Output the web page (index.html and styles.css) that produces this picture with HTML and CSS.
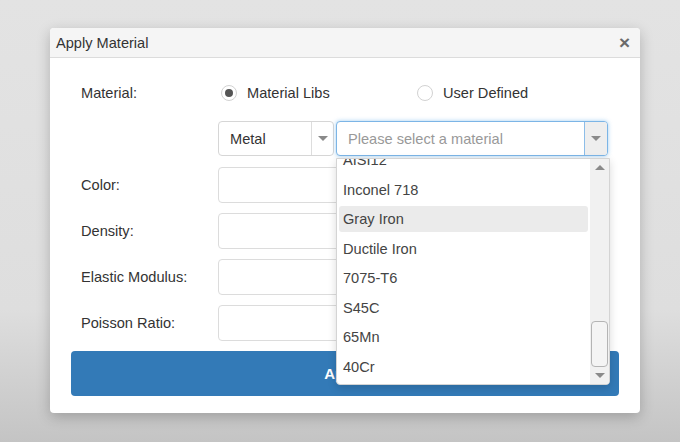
FILE: index.html
```html
<!DOCTYPE html>
<html>
<head>
    <title>Apply Material</title>
    <link rel="stylesheet" href="styles.css">
</head>
<body>
    <div class="dialog">
        <div class="dialog-header">
            <span class="dialog-title">Apply Material</span>
            <span class="close">&times;</span>
        </div>

        <div class="dialog-body">
            <div class="form-row radio-row">
                <label class="form-label">Material:</label>
                <div class="form-field radios">
                    <label class="radio"><span class="radio-dot checked"></span>Material Libs</label>
                    <label class="radio"><span class="radio-dot"></span>User Defined</label>
                </div>
            </div>

            <div class="form-row select-row">
                <div class="form-label"></div>
                <div class="form-field selects">
                    <div class="select type-select">
                        <span class="select-text">Metal</span>
                        <span class="select-arrow"><span class="caret"></span></span>
                    </div>
                    <div class="select material-select">
                        <span class="select-text placeholder">Please select a material</span>
                        <span class="select-arrow"><span class="caret"></span></span>

                        <div class="dropdown">
                            <ul class="options">
                                <li>AISI12</li>
                                <li>Inconel 718</li>
                                <li class="hover">Gray Iron</li>
                                <li>Ductile Iron</li>
                                <li>7075-T6</li>
                                <li>S45C</li>
                                <li>65Mn</li>
                                <li>40Cr</li>
                            </ul>
                            <div class="scrollbar">
                                <div class="scroll-btn"><span class="caret up"></span></div>
                                <div class="scroll-track"><div class="scroll-thumb"></div></div>
                                <div class="scroll-btn"><span class="caret"></span></div>
                            </div>
                        </div>
                    </div>
                </div>
            </div>

            <div class="form-row">
                <label class="form-label">Color:</label>
                <div class="form-field"><input type="text" class="input"></div>
            </div>
            <div class="form-row">
                <label class="form-label">Density:</label>
                <div class="form-field"><input type="text" class="input"></div>
            </div>
            <div class="form-row">
                <label class="form-label">Elastic Modulus:</label>
                <div class="form-field"><input type="text" class="input"></div>
            </div>
            <div class="form-row">
                <label class="form-label">Poisson Ratio:</label>
                <div class="form-field"><input type="text" class="input"></div>
            </div>

            <button class="btn-apply">Apply</button>
        </div>
    </div>
</body>
</html>
```

FILE: styles.css
```css
html, body { height: 100%; }
body { margin: 0; font-family: "Liberation Sans", Arial, sans-serif; font-size: 14.6px; color: #333; background: linear-gradient(#e3e3e3 0%, #dedede 70%, #c4c4c4 100%); overflow: hidden; }

.dialog { width: 590px; margin: 28px 0 0 50px; background: #fff; border-radius: 4px; box-shadow: 0 4px 14px rgba(0,0,0,0.22); box-sizing: border-box; }
.dialog-header { height: 30px; display: flex; align-items: center; justify-content: space-between; padding: 0 10px 0 6px; background: #f5f5f5; border-bottom: 1px solid #dcdcdc; border-radius: 4px 4px 0 0; box-sizing: border-box; }
.dialog-title { font-size: 14.6px; color: #333; }
.close { font-size: 19px; font-weight: bold; color: #6a6a6a; line-height: 1; }

.dialog-body { padding: 22px 21px 17px; }
.form-row { display: flex; align-items: center; padding-right: 11px; margin-top: 10px; }
.radio-row { height: 26px; margin-top: 0; }
.select-row { margin-top: 15px; }
.select-row + .form-row { margin-top: 11px; }
.form-label { width: 147px; padding-left: 10px; box-sizing: border-box; flex-shrink: 0; }
.form-field { flex: 1; }

.radios { display: grid; grid-template-columns: 1fr 1fr; }
.radio { display: flex; align-items: center; padding-left: 3px; }
.radio + .radio { padding-left: 4px; }
.radio-dot { width: 16px; height: 16px; border: 1px solid #d2d2d2; border-radius: 50%; margin-right: 10px; box-sizing: border-box; display: flex; align-items: center; justify-content: center; background: #fff; }
.radio-dot.checked::after { content: ""; width: 8px; height: 8px; border-radius: 50%; background: #555; }

.selects { display: flex; gap: 2px; }
.select { position: relative; height: 35px; display: flex; align-items: stretch; border: 1px solid #d6d6d6; border-radius: 4px; box-sizing: border-box; background: #fff; }
.type-select { width: 116px; }
.material-select { flex: 1; border-color: #7cb5e6; box-shadow: 0 0 4px rgba(102,175,233,0.6); }
.select-text { flex: 1; display: flex; align-items: center; padding-left: 11px; }
.placeholder { color: #999; }
.select-arrow { width: 21px; display: flex; align-items: center; justify-content: center; border-left: 1px solid #ddd; }
.material-select .select-arrow { width: 22px; background: #eee; border-left-color: #8cbde8; border-radius: 0 3px 3px 0; }
.caret { width: 0; height: 0; border-left: 5px solid transparent; border-right: 5px solid transparent; border-top: 5px solid #8a8a8a; }
.caret.up { border-top: none; border-bottom: 5px solid #8a8a8a; }

.dropdown { position: absolute; top: 36px; left: -1px; width: 274px; height: 227px; display: flex; background: #fff; border: 1px solid #d4d4d4; border-radius: 0 0 4px 4px; box-sizing: border-box; box-shadow: 0 3px 8px rgba(0,0,0,0.15); overflow: hidden; z-index: 2; }
.options { flex: 1; list-style: none; margin: -12px 0 0; padding: 0 2px 0 2px; }
.options li { height: 26px; line-height: 26px; margin-bottom: 3.5px; padding-left: 4px; border-radius: 3px; color: #444; }
.options li.hover { background: #ebebeb; }
.scrollbar { width: 19px; display: flex; flex-direction: column; background: #f1f1f1; }
.scroll-btn { height: 17px; display: flex; align-items: center; justify-content: center; }
.scroll-track { flex: 1; display: flex; flex-direction: column; justify-content: flex-end; }
.scroll-thumb { height: 46px; margin: 0 1px 0 1px; border: 1px solid #b4b4b4; border-radius: 4px; background: #f4f4f4; box-sizing: border-box; }

.input { display: block; width: 100%; height: 36px; border: 1px solid #dcdcdc; border-radius: 4px; box-sizing: border-box; font: inherit; padding: 0 12px; background: #fff; }

.btn-apply { display: block; width: 100%; height: 45px; margin-top: 10px; border: none; border-radius: 4px; background: #337ab7; color: #fff; font-family: "Liberation Sans", Arial, sans-serif; font-size: 15px; font-weight: bold; }
```
